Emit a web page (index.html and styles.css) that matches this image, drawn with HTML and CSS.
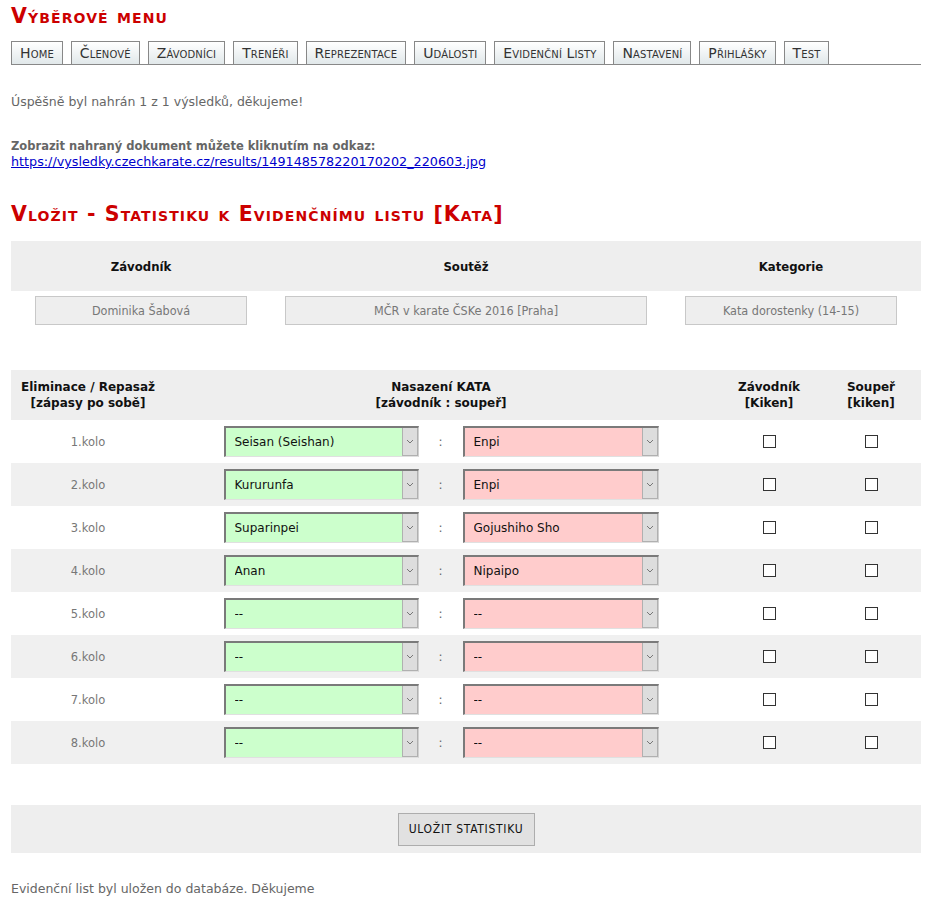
FILE: index.html
```html
<!DOCTYPE html>
<html lang="cs">
<head>
<meta charset="utf-8">
<title>Výběrové menu</title>
<link rel="stylesheet" href="styles.css">
</head>
<body>
<div class="page">
  <h1 class="title">Výběrové menu</h1>
  <nav class="tabs">
    <a class="tab">Home</a>
    <a class="tab">Členové</a>
    <a class="tab">Závodníci</a>
    <a class="tab">Trenéři</a>
    <a class="tab">Reprezentace</a>
    <a class="tab">Události</a>
    <a class="tab">Evidenční Listy</a>
    <a class="tab">Nastavení</a>
    <a class="tab">Přihlášky</a>
    <a class="tab">Test</a>
  </nav>

  <p class="msg">Úspěšně byl nahrán 1 z 1 výsledků, děkujeme!</p>

  <p class="doc">
    <b>Zobrazit nahraný dokument můžete kliknutím na odkaz:</b><br>
    <a class="link" href="#">https://vysledky.czechkarate.cz/results/149148578220170202_220603.jpg</a>
  </p>

  <h2 class="title title2">Vložit - Statistiku k Evidenčnímu listu [Kata]</h2>

  <div class="info">
    <div class="info-h">Závodník</div>
    <div class="info-h">Soutěž</div>
    <div class="info-h">Kategorie</div>
    <div class="info-c"><input class="ro ro-s" value="Dominika Šabová" readonly></div>
    <div class="info-c"><input class="ro ro-l" value="MČR v karate ČSKe 2016 [Praha]" readonly></div>
    <div class="info-c"><input class="ro ro-s" value="Kata dorostenky (14-15)" readonly></div>
  </div>

  <div class="stats">
    <div class="row head">
      <div class="c1">Eliminace / Repasaž<br>[zápasy po sobě]</div>
      <div class="c2">Nasazení KATA<br>[závodník : soupeř]</div>
      <div class="c3">Závodník<br>[Kiken]</div>
      <div class="c4">Soupeř<br>[kiken]</div>
    </div>

    <div class="row">
      <div class="c1 kolo">1.kolo</div>
      <div class="c2 pair">
        <span class="sel green"><select><option>Seisan (Seishan)</option></select><span class="arr"><svg width="8" height="5" viewBox="0 0 8 5"><path d="M1 1l3 3 3-3" fill="none" stroke="#777" stroke-width="1"/></svg></span></span>
        <span class="colon">:</span>
        <span class="sel red"><select><option>Enpi</option></select><span class="arr"><svg width="8" height="5" viewBox="0 0 8 5"><path d="M1 1l3 3 3-3" fill="none" stroke="#777" stroke-width="1"/></svg></span></span>
      </div>
      <div class="c3"><input type="checkbox" class="chk"></div>
      <div class="c4"><input type="checkbox" class="chk"></div>
    </div>

    <div class="row alt">
      <div class="c1 kolo">2.kolo</div>
      <div class="c2 pair">
        <span class="sel green"><select><option>Kururunfa</option></select><span class="arr"><svg width="8" height="5" viewBox="0 0 8 5"><path d="M1 1l3 3 3-3" fill="none" stroke="#777" stroke-width="1"/></svg></span></span>
        <span class="colon">:</span>
        <span class="sel red"><select><option>Enpi</option></select><span class="arr"><svg width="8" height="5" viewBox="0 0 8 5"><path d="M1 1l3 3 3-3" fill="none" stroke="#777" stroke-width="1"/></svg></span></span>
      </div>
      <div class="c3"><input type="checkbox" class="chk"></div>
      <div class="c4"><input type="checkbox" class="chk"></div>
    </div>

    <div class="row">
      <div class="c1 kolo">3.kolo</div>
      <div class="c2 pair">
        <span class="sel green"><select><option>Suparinpei</option></select><span class="arr"><svg width="8" height="5" viewBox="0 0 8 5"><path d="M1 1l3 3 3-3" fill="none" stroke="#777" stroke-width="1"/></svg></span></span>
        <span class="colon">:</span>
        <span class="sel red"><select><option>Gojushiho Sho</option></select><span class="arr"><svg width="8" height="5" viewBox="0 0 8 5"><path d="M1 1l3 3 3-3" fill="none" stroke="#777" stroke-width="1"/></svg></span></span>
      </div>
      <div class="c3"><input type="checkbox" class="chk"></div>
      <div class="c4"><input type="checkbox" class="chk"></div>
    </div>

    <div class="row alt">
      <div class="c1 kolo">4.kolo</div>
      <div class="c2 pair">
        <span class="sel green"><select><option>Anan</option></select><span class="arr"><svg width="8" height="5" viewBox="0 0 8 5"><path d="M1 1l3 3 3-3" fill="none" stroke="#777" stroke-width="1"/></svg></span></span>
        <span class="colon">:</span>
        <span class="sel red"><select><option>Nipaipo</option></select><span class="arr"><svg width="8" height="5" viewBox="0 0 8 5"><path d="M1 1l3 3 3-3" fill="none" stroke="#777" stroke-width="1"/></svg></span></span>
      </div>
      <div class="c3"><input type="checkbox" class="chk"></div>
      <div class="c4"><input type="checkbox" class="chk"></div>
    </div>

    <div class="row">
      <div class="c1 kolo">5.kolo</div>
      <div class="c2 pair">
        <span class="sel green"><select><option>--</option></select><span class="arr"><svg width="8" height="5" viewBox="0 0 8 5"><path d="M1 1l3 3 3-3" fill="none" stroke="#777" stroke-width="1"/></svg></span></span>
        <span class="colon">:</span>
        <span class="sel red"><select><option>--</option></select><span class="arr"><svg width="8" height="5" viewBox="0 0 8 5"><path d="M1 1l3 3 3-3" fill="none" stroke="#777" stroke-width="1"/></svg></span></span>
      </div>
      <div class="c3"><input type="checkbox" class="chk"></div>
      <div class="c4"><input type="checkbox" class="chk"></div>
    </div>

    <div class="row alt">
      <div class="c1 kolo">6.kolo</div>
      <div class="c2 pair">
        <span class="sel green"><select><option>--</option></select><span class="arr"><svg width="8" height="5" viewBox="0 0 8 5"><path d="M1 1l3 3 3-3" fill="none" stroke="#777" stroke-width="1"/></svg></span></span>
        <span class="colon">:</span>
        <span class="sel red"><select><option>--</option></select><span class="arr"><svg width="8" height="5" viewBox="0 0 8 5"><path d="M1 1l3 3 3-3" fill="none" stroke="#777" stroke-width="1"/></svg></span></span>
      </div>
      <div class="c3"><input type="checkbox" class="chk"></div>
      <div class="c4"><input type="checkbox" class="chk"></div>
    </div>

    <div class="row">
      <div class="c1 kolo">7.kolo</div>
      <div class="c2 pair">
        <span class="sel green"><select><option>--</option></select><span class="arr"><svg width="8" height="5" viewBox="0 0 8 5"><path d="M1 1l3 3 3-3" fill="none" stroke="#777" stroke-width="1"/></svg></span></span>
        <span class="colon">:</span>
        <span class="sel red"><select><option>--</option></select><span class="arr"><svg width="8" height="5" viewBox="0 0 8 5"><path d="M1 1l3 3 3-3" fill="none" stroke="#777" stroke-width="1"/></svg></span></span>
      </div>
      <div class="c3"><input type="checkbox" class="chk"></div>
      <div class="c4"><input type="checkbox" class="chk"></div>
    </div>

    <div class="row alt">
      <div class="c1 kolo">8.kolo</div>
      <div class="c2 pair">
        <span class="sel green"><select><option>--</option></select><span class="arr"><svg width="8" height="5" viewBox="0 0 8 5"><path d="M1 1l3 3 3-3" fill="none" stroke="#777" stroke-width="1"/></svg></span></span>
        <span class="colon">:</span>
        <span class="sel red"><select><option>--</option></select><span class="arr"><svg width="8" height="5" viewBox="0 0 8 5"><path d="M1 1l3 3 3-3" fill="none" stroke="#777" stroke-width="1"/></svg></span></span>
      </div>
      <div class="c3"><input type="checkbox" class="chk"></div>
      <div class="c4"><input type="checkbox" class="chk"></div>
    </div>
  </div>

  <div class="save">
    <button class="btn" type="button">ULOŽIT STATISTIKU</button>
  </div>

  <p class="msg end">Evidenční list byl uložen do databáze. Děkujeme</p>
</div>
</body>
</html>
```

FILE: styles.css
```css
html, body {
  margin: 0;
  padding: 0;
  background: #fff;
}

body {
  font-family: "DejaVu Sans", Verdana, sans-serif;
  font-size: 12px;
  color: #666;
}

.page {
  width: 910px;
  margin-left: 11px;
  padding-top: 4px;
}

.title {
  margin: 0;
  font-size: 20.5px;
  line-height: 25px;
  font-weight: bold;
  font-variant: small-caps;
  color: #cc0000;
  letter-spacing: 1.1px;
}

.tabs {
  display: flex;
  gap: 8px;
  margin-top: 12px;
  border-bottom: 1px solid #888;
  height: 23px;
  align-items: flex-end;
}

.tab {
  display: block;
  height: 23px;
  box-sizing: border-box;
  padding: 0 8px;
  border: 1px solid #888;
  border-bottom: none;
  background: linear-gradient(#ffffff, #e1e8ea);
  color: #333;
  font-variant: small-caps;
  font-size: 14px;
  letter-spacing: 0.12px;
  line-height: 23px;
  text-decoration: none;
  white-space: nowrap;
}

.msg {
  margin: 29px 0 0;
  font-size: 12.5px;
  line-height: 16px;
}

.doc {
  margin: 28px 0 0;
  line-height: 16px;
}

.doc b {
  color: #666;
  font-size: 11.5px;
}

.link {
  color: #0000cc;
  text-decoration: underline;
  font-size: 12.75px;
}

.title2 {
  margin-top: 32px;
}

.info {
  margin-top: 14px;
  display: grid;
  grid-template-columns: 260px 390px 260px;
  font-family: "DejaVu Sans Condensed", "DejaVu Sans", sans-serif;
}

.info-h {
  background: #eeeeee;
  height: 50px;
  display: flex;
  align-items: center;
  justify-content: center;
  font-weight: bold;
  font-size: 13px;
  color: #111;
}

.info-c {
  display: flex;
  justify-content: center;
  padding-top: 5px;
}

.ro {
  box-sizing: border-box;
  height: 29px;
  background: #eeeeee;
  border: 1px solid #c8c8c8;
  color: #777;
  font-family: "DejaVu Sans Condensed", "DejaVu Sans", sans-serif;
  font-size: 12.5px;
  text-align: center;
  padding: 0;
  outline: none;
}

.ro-s { width: 212px; }
.ro-l { width: 362px; }

.stats {
  margin-top: 45px;
}

.row {
  display: grid;
  grid-template-columns: 154px 552px 104px 100px;
  height: 43px;
  align-items: center;
}

.row.alt {
  background: #f0f0f0;
}

.row.head {
  height: 50px;
  background: #eeeeee;
  font-weight: bold;
  color: #111;
  line-height: 16px;
}

.row > div {
  text-align: center;
}

.kolo {
  color: #777;
  font-size: 11.5px;
}

.pair {
  display: flex;
  justify-content: center;
  align-items: center;
}

.colon {
  width: 44px;
  text-align: center;
  color: #666;
}

.sel {
  display: flex;
  box-sizing: border-box;
  height: 31px;
  border-top: 2px solid #7a7a7a;
  border-left: 2px solid #7a7a7a;
  border-right: 1px solid #d0d0d0;
  border-bottom: 1px solid #e0e0e0;
}

.sel.green {
  width: 195px;
  background: #ccffcc;
}

.sel.red {
  width: 196px;
  background: #ffcccc;
}

.sel select {
  flex: 1;
  min-width: 0;
  appearance: none;
  -webkit-appearance: none;
  background: transparent;
  border: none;
  outline: none;
  font-family: "DejaVu Sans", Verdana, sans-serif;
  font-size: 12px;
  color: #111;
  padding: 0 0 0 9px;
  margin: 0;
  height: 100%;
}

.arr {
  width: 16px;
  box-sizing: border-box;
  background: #dddddd;
  border: 1px solid #b0b0b0;
  border-top: none;
  display: flex;
  align-items: center;
  justify-content: center;
}

.chk {
  appearance: none;
  -webkit-appearance: none;
  width: 13px;
  height: 13px;
  box-sizing: border-box;
  border: 1.5px solid #333;
  background: #fff;
  margin: 0;
  vertical-align: middle;
}

.c3, .c4 {
  display: flex;
  justify-content: center;
  align-items: center;
}

.row.head .c3, .row.head .c4 {
  display: block;
}

.save {
  margin-top: 41px;
  height: 48px;
  background: #eeeeee;
  display: flex;
  align-items: center;
  justify-content: center;
}

.btn {
  width: 137px;
  height: 33px;
  background: #e1e1e1;
  border: 1px solid #adadad;
  border-radius: 0;
  font-family: "DejaVu Sans Condensed", "DejaVu Sans", sans-serif;
  font-size: 12px;
  letter-spacing: 0.7px;
  color: #111;
  padding: 0;
}

.end {
  margin-top: 28px;
}
```
